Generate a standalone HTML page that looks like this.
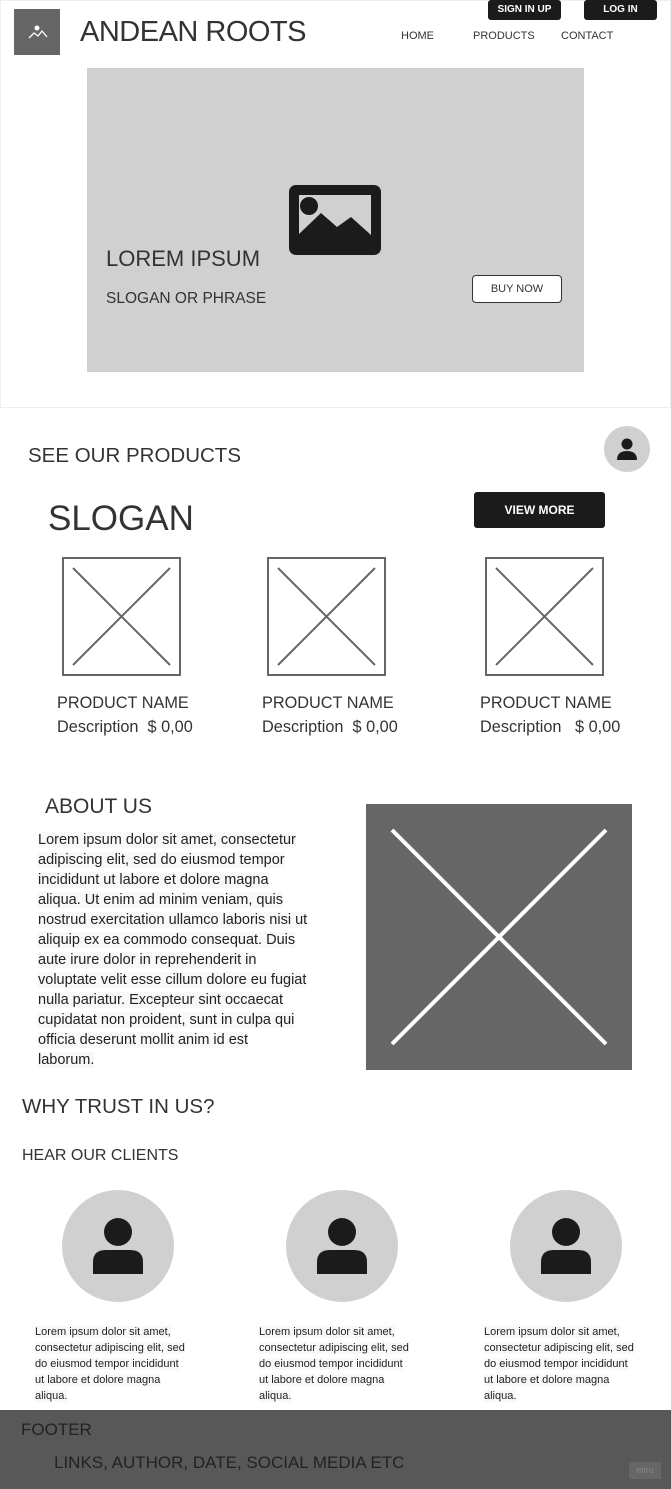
<!DOCTYPE html>
<html><head><meta charset="utf-8"><style>
*{margin:0;padding:0;box-sizing:border-box}
body{width:671px;height:1489px;position:relative;background:#fff;font-family:"Liberation Sans",sans-serif;color:#333;overflow:hidden}
.a{position:absolute;white-space:nowrap}
.btn{position:absolute;background:#1b1b1b;color:#fff;font-size:10px;font-weight:bold;text-align:center;border-radius:3px}
.pn{font-size:16.3px;color:#333}
.lines span{background:#f7f8fa;display:inline}
.circ{position:absolute;width:112px;height:112px;border-radius:50%;background:#d0d0d0}
.ct{position:absolute;font-size:11px;line-height:16px;color:#222}
</style></head><body>
<div class="a" style="left:0;top:0;width:671px;height:408px;border:1px solid #eee"></div>
<div class="a" style="left:14px;top:9px;width:46px;height:46px;background:#666"></div>
<svg class="a" style="left:14px;top:9px" width="46" height="46"><circle cx="23" cy="19" r="2.5" fill="#fff"/><path d="M15 29 L20 24 L24 27 L28 22 L33 28" stroke="#fff" stroke-width="1.3" fill="none"/></svg>
<div class="a" style="left:80px;top:16px;font-size:29px;letter-spacing:-0.5px;color:#333">ANDEAN ROOTS</div>
<div class="a" style="left:401px;top:30px;font-size:11px">HOME</div>
<div class="a" style="left:473px;top:30px;font-size:11px">PRODUCTS</div>
<div class="a" style="left:561px;top:30px;font-size:11px">CONTACT</div>
<div class="btn" style="left:488px;top:0;width:73px;height:20px;line-height:20px">SIGN IN UP</div>
<div class="btn" style="left:584px;top:0;width:73px;height:20px;line-height:20px">LOG IN</div>
<div class="a" style="left:87px;top:68px;width:497px;height:304px;background:#d0d0d0"></div>
<svg class="a" style="left:289px;top:185px" width="92" height="70"><rect x="0" y="0" width="92" height="70" rx="7" fill="#1b1b1b"/><rect x="10" y="10" width="72" height="50" fill="#d0d0d0"/><circle cx="20" cy="21" r="9" fill="#1b1b1b"/><path d="M10 49 L32 28 L48 42 L62 32 L82 50 L82 60 L10 60Z" fill="#1b1b1b"/></svg>
<div class="a" style="left:106px;top:246px;font-size:22px">LOREM IPSUM</div>
<div class="a" style="left:106px;top:290px;font-size:15.5px">SLOGAN OR PHRASE</div>
<div class="a" style="left:472px;top:275px;width:90px;height:28px;border:1px solid #333;border-radius:4px;background:#fff;font-size:11px;text-align:center;line-height:26px">BUY NOW</div>
<div class="a" style="left:28px;top:444px;font-size:20.5px">SEE OUR PRODUCTS</div>
<div class="a" style="left:604px;top:426px;width:46px;height:46px;border-radius:50%;background:#d0d0d0"></div>
<svg class="a" style="left:604px;top:426px" width="46" height="46"><circle cx="23" cy="18" r="5.5" fill="#1b1b1b"/><path d="M13 34 Q13 25 23 25 Q33 25 33 34Z" fill="#1b1b1b"/></svg>
<div class="a" style="left:48px;top:499px;font-size:35px">SLOGAN</div>
<div class="btn" style="left:474px;top:492px;width:131px;height:36px;line-height:36px;font-size:12px">VIEW MORE</div>
<svg class="a" style="left:62px;top:557px" width="119" height="119"><rect x="1" y="1" width="117" height="117" fill="none" stroke="#666" stroke-width="2"/><path d="M11 11 L108 108 M108 11 L11 108" stroke="#666" stroke-width="2"/></svg>
<svg class="a" style="left:267px;top:557px" width="119" height="119"><rect x="1" y="1" width="117" height="117" fill="none" stroke="#666" stroke-width="2"/><path d="M11 11 L108 108 M108 11 L11 108" stroke="#666" stroke-width="2"/></svg>
<svg class="a" style="left:485px;top:557px" width="119" height="119"><rect x="1" y="1" width="117" height="117" fill="none" stroke="#666" stroke-width="2"/><path d="M11 11 L108 108 M108 11 L11 108" stroke="#666" stroke-width="2"/></svg>
<div class="a pn" style="left:57px;top:694px">PRODUCT NAME</div>
<div class="a pn" style="left:57px;top:718px">Description&nbsp; $ 0,00</div>
<div class="a pn" style="left:262px;top:694px">PRODUCT NAME</div>
<div class="a pn" style="left:262px;top:718px">Description&nbsp; $ 0,00</div>
<div class="a pn" style="left:480px;top:694px">PRODUCT NAME</div>
<div class="a pn" style="left:480px;top:718px">Description&nbsp;&nbsp; $ 0,00</div>
<div class="a" style="left:45px;top:795px;font-size:21px">ABOUT US</div>
<div class="a lines" style="left:38px;top:830px;font-size:14.5px;line-height:20px;color:#222"><span>Lorem ipsum dolor sit amet, consectetur</span><br><span>adipiscing elit, sed do eiusmod tempor</span><br><span>incididunt ut labore et dolore magna</span><br><span>aliqua. Ut enim ad minim veniam, quis</span><br><span>nostrud exercitation ullamco laboris nisi ut</span><br><span>aliquip ex ea commodo consequat. Duis</span><br><span>aute irure dolor in reprehenderit in</span><br><span>voluptate velit esse cillum dolore eu fugiat</span><br><span>nulla pariatur. Excepteur sint occaecat</span><br><span>cupidatat non proident, sunt in culpa qui</span><br><span>officia deserunt mollit anim id est</span><br><span>laborum.</span></div>
<svg class="a" style="left:366px;top:804px" width="266" height="266"><rect width="266" height="266" fill="#666"/><path d="M26 26 L240 240 M240 26 L26 240" stroke="#fff" stroke-width="4"/></svg>
<div class="a" style="left:22px;top:1095px;font-size:20.5px">WHY TRUST IN US?</div>
<div class="a" style="left:22px;top:1147px;font-size:16px">HEAR OUR CLIENTS</div>
<div class="circ" style="left:62px;top:1190px"></div>
<div class="circ" style="left:286px;top:1190px"></div>
<div class="circ" style="left:510px;top:1190px"></div>
<svg class="a" style="left:62px;top:1190px" width="112" height="112"><circle cx="56" cy="42" r="14" fill="#1b1b1b"/><path d="M31 84 L31 72 Q31 60 44 60 L68 60 Q81 60 81 72 L81 84Z" fill="#1b1b1b"/></svg>
<svg class="a" style="left:286px;top:1190px" width="112" height="112"><circle cx="56" cy="42" r="14" fill="#1b1b1b"/><path d="M31 84 L31 72 Q31 60 44 60 L68 60 Q81 60 81 72 L81 84Z" fill="#1b1b1b"/></svg>
<svg class="a" style="left:510px;top:1190px" width="112" height="112"><circle cx="56" cy="42" r="14" fill="#1b1b1b"/><path d="M31 84 L31 72 Q31 60 44 60 L68 60 Q81 60 81 72 L81 84Z" fill="#1b1b1b"/></svg>
<div class="ct lines" style="left:35px;top:1324px"><span>Lorem ipsum dolor sit amet,</span><br><span>consectetur adipiscing elit, sed</span><br><span>do eiusmod tempor incididunt</span><br><span>ut labore et dolore magna</span><br><span>aliqua.</span></div>
<div class="ct lines" style="left:259px;top:1324px"><span>Lorem ipsum dolor sit amet,</span><br><span>consectetur adipiscing elit, sed</span><br><span>do eiusmod tempor incididunt</span><br><span>ut labore et dolore magna</span><br><span>aliqua.</span></div>
<div class="ct lines" style="left:484px;top:1324px"><span>Lorem ipsum dolor sit amet,</span><br><span>consectetur adipiscing elit, sed</span><br><span>do eiusmod tempor incididunt</span><br><span>ut labore et dolore magna</span><br><span>aliqua.</span></div>
<div class="a" style="left:0;top:1410px;width:671px;height:79px;background:#585858"></div>
<div class="a" style="left:21px;top:1420px;font-size:17px;color:#222">FOOTER</div>
<div class="a" style="left:54px;top:1453px;font-size:17px;color:#222">LINKS, AUTHOR, DATE, SOCIAL MEDIA ETC</div>
<div class="a" style="left:629px;top:1462px;width:32px;height:17px;background:#666;color:#888;font-size:9px;text-align:center;line-height:17px">miro</div>
</body></html>
